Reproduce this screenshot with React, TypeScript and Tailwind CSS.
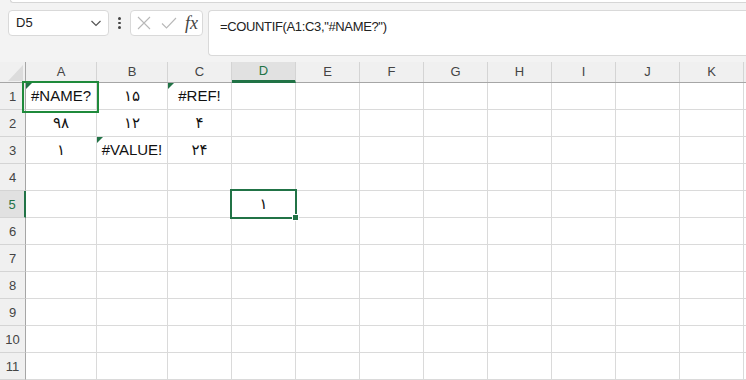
import React from "react";

const cols = [
  { l: "A", w: 71 },
  { l: "B", w: 71 },
  { l: "C", w: 64 },
  { l: "D", w: 64 },
  { l: "E", w: 64 },
  { l: "F", w: 64 },
  { l: "G", w: 64 },
  { l: "H", w: 64 },
  { l: "I", w: 64 },
  { l: "J", w: 64 },
  { l: "K", w: 64 },
];

const data: Record<string, string> = {
  A1: "#NAME?",
  B1: "۱۵",
  C1: "#REF!",
  A2: "۹۸",
  B2: "۱۲",
  C2: "۴",
  A3: "۱",
  B3: "#VALUE!",
  C3: "۲۴",
  D5: "۱",
};

const errs = ["A1", "C1", "B3"];

const font = { fontFamily: '"Liberation Sans", "DejaVu Sans", sans-serif' };

export default function App() {
  return (
    <div className="w-[746px] h-[380px] overflow-hidden bg-[#f3f3f3] text-[#222]" style={font}>
      {/* toolbar */}
      <div className="h-[62px] flex flex-col">
        <div className="h-[3px] ml-[10px] bg-white border-l border-b border-[#d6d6d6] rounded-bl-[4px]" />
        <div className="flex items-start mt-[7px] pl-[8px]">
          <div className="w-[101px] h-[26px] bg-white border border-[#d9d9d9] rounded-[4px] flex items-center justify-between pl-[7px] pr-[6px]">
            <span className="text-[13px] text-[#222]">D5</span>
            <svg width="12" height="8" viewBox="0 0 12 8" fill="none" stroke="#555" strokeWidth="1.2">
              <path d="M1.5 2l4.5 4.5L10.5 2" />
            </svg>
          </div>
          <div className="w-[21px] h-[26px] flex flex-col items-center justify-center gap-[2px]">
            <div className="w-[2.5px] h-[2.5px] bg-[#444] rounded-full" />
            <div className="w-[2.5px] h-[2.5px] bg-[#444] rounded-full" />
            <div className="w-[2.5px] h-[2.5px] bg-[#444] rounded-full" />
          </div>
          <div className="w-[73px] h-[26px] bg-white border border-[#d9d9d9] rounded-[4px] flex items-center pl-[6px]">
            <svg width="14" height="14" viewBox="0 0 14 14" fill="none" stroke="#b8b8b8" strokeWidth="1.1">
              <path d="M1 1l12 12M13 1L1 13" />
            </svg>
            <svg width="16" height="14" viewBox="0 0 16 14" fill="none" stroke="#b8b8b8" strokeWidth="1.1" className="ml-[10px]">
              <path d="M1 7.5l4.5 4.5L15 2" />
            </svg>
            <span
              className="ml-[8px] text-[18px] italic text-[#444] leading-none"
              style={{ fontFamily: '"Liberation Serif", "DejaVu Serif", serif' }}
            >
              fx
            </span>
          </div>
          <div className="ml-[5px] flex-1 h-[46px] bg-white border border-r-0 border-[#d9d9d9] rounded-l-[4px] pl-[11px] pt-[3px]">
            <span className="text-[13px] tracking-[-0.35px] text-[#222]">=COUNTIF(A1:C3,"#NAME?")</span>
          </div>
        </div>
      </div>

      {/* grid */}
      <div className="relative bg-white">
        {/* column header */}
        <div className="flex h-[21px] bg-[#f0f0f0] border-b border-[#a6a6a6]">
          <div className="w-[26px] shrink-0 border-r border-[#a6a6a6] relative">
            <svg className="absolute right-[2px] bottom-[1px]" width="15" height="16" viewBox="0 0 15 16">
              <path d="M15 0L15 16L0 16Z" fill="#dcdcdc" />
            </svg>
          </div>
          {cols.map((c) => (
            <div
              key={c.l}
              style={{ width: c.w }}
              className={
                c.l === "D"
                  ? "shrink-0 flex items-center justify-center text-[13px] text-[#217346] bg-[#e1e1e1] border-r border-[#d4d4d4] border-b-[3px] border-b-[#217346] -mb-px"
                  : "shrink-0 flex items-center justify-center text-[13px] text-[#444] border-r border-[#d4d4d4]"
              }
            >
              {c.l}
            </div>
          ))}
          <div className="flex-1" />
        </div>
        {/* rows */}
        {Array.from({ length: 11 }, (_, i) => i + 1).map((r) => (
          <div key={r} className="flex h-[27px]">
            <div
              className={
                r === 5
                  ? "w-[26px] shrink-0 bg-[#e1e1e1] border-r-2 border-r-[#217346] border-b border-b-[#d4d4d4] flex items-end justify-center pb-[3px] text-[13px] text-[#217346]"
                  : "w-[26px] shrink-0 bg-[#f0f0f0] border-r border-r-[#a6a6a6] border-b border-b-[#d4d4d4] flex items-end justify-center pb-[3px] text-[13px] text-[#444]"
              }
            >
              {r}
            </div>
            {cols.map((c) => {
              const id = c.l + r;
              const v = data[id];
              return (
                <div
                  key={id}
                  style={{ width: c.w }}
                  className="shrink-0 relative border-r border-b border-[#dadada] flex items-center justify-center text-[15px] text-[#111]"
                >
                  {errs.includes(id) && (
                    <svg className="absolute left-0 top-0" width="6" height="6" viewBox="0 0 6 6">
                      <path d="M0 0H6L0 6Z" fill="#217346" />
                    </svg>
                  )}
                  {v}
                </div>
              );
            })}
            <div className="flex-1 border-b border-[#dadada]" />
          </div>
        ))}

        {/* A1 highlight */}
        <div className="absolute left-[22px] top-[19px] w-[77px] h-[32px] border-2 border-[#1f8a3b] pointer-events-none" />
        {/* D5 active cell */}
        <div className="absolute left-[230px] top-[127px] w-[67px] h-[30px] border-2 border-[#217346] pointer-events-none" />
        <div className="absolute left-[292px] top-[152px] w-[7px] h-[7px] bg-[#217346] border border-white pointer-events-none" />
      </div>
    </div>
  );
}
